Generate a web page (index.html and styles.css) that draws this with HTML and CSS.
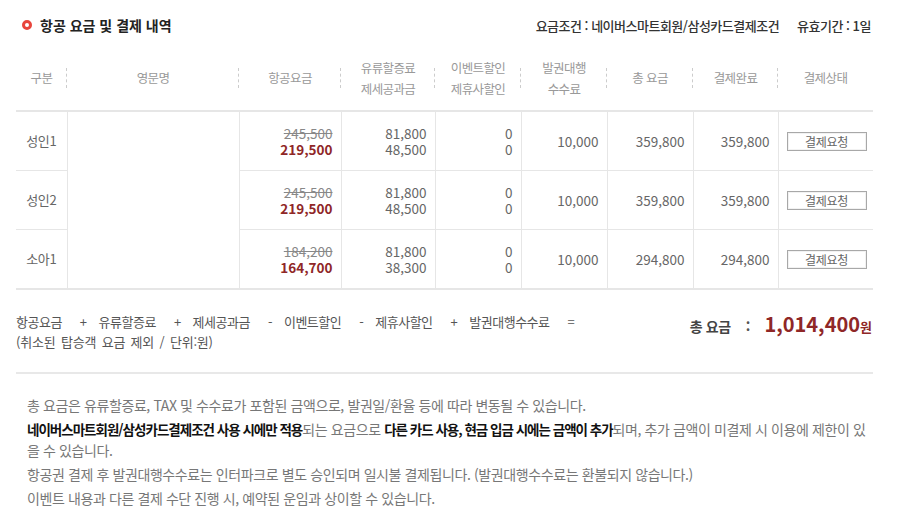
FILE: index.html
```html
<!DOCTYPE html>
<html lang="ko">
<head>
    <meta charset="UTF-8">
    <meta name="viewport" content="width=device-width, initial-scale=1.0">
    <title>항공 요금 및 결제 내역</title>
    <link rel="stylesheet" href="styles.css">
</head>
<body>
    <div class="wrap">
        <div class="head">
            <h2 class="title"><span class="dot"></span>항공 요금 및 결제 내역</h2>
            <div class="cond">
                <span>요금조건 : 네이버스마트회원/삼성카드결제조건</span>
                <span>유효기간 : 1일</span>
            </div>
        </div>

        <table class="fare">
            <colgroup>
                <col style="width:51px">
                <col style="width:172px">
                <col style="width:102px">
                <col style="width:94px">
                <col style="width:86px">
                <col style="width:86px">
                <col style="width:86px">
                <col style="width:85px">
                <col style="width:95px">
            </colgroup>
            <thead>
                <tr>
                    <th>구분</th>
                    <th>영문명</th>
                    <th>항공요금</th>
                    <th>유류할증료<br>제세공과금</th>
                    <th>이벤트할인<br>제휴사할인</th>
                    <th>발권대행<br>수수료</th>
                    <th>총 요금</th>
                    <th>결제완료</th>
                    <th>결제상태</th>
                </tr>
            </thead>
            <tbody>
                <tr>
                    <td class="c">성인1</td>
                    <td rowspan="3"></td>
                    <td class="num"><span class="old">245,500</span><br><span class="new">219,500</span></td>
                    <td class="num">81,800<br>48,500</td>
                    <td class="num">0<br>0</td>
                    <td class="num">10,000</td>
                    <td class="num">359,800</td>
                    <td class="num">359,800</td>
                    <td class="c"><button class="pay-btn">결제요청</button></td>
                </tr>
                <tr>
                    <td class="c">성인2</td>
                    <td class="num"><span class="old">245,500</span><br><span class="new">219,500</span></td>
                    <td class="num">81,800<br>48,500</td>
                    <td class="num">0<br>0</td>
                    <td class="num">10,000</td>
                    <td class="num">359,800</td>
                    <td class="num">359,800</td>
                    <td class="c"><button class="pay-btn">결제요청</button></td>
                </tr>
                <tr>
                    <td class="c">소아1</td>
                    <td class="num"><span class="old">184,200</span><br><span class="new">164,700</span></td>
                    <td class="num">81,800<br>38,300</td>
                    <td class="num">0<br>0</td>
                    <td class="num">10,000</td>
                    <td class="num">294,800</td>
                    <td class="num">294,800</td>
                    <td class="c"><button class="pay-btn">결제요청</button></td>
                </tr>
            </tbody>
        </table>

        <div class="sum">
            <div class="formula">
                <p>항공요금<span class="op">+</span>유류할증료<span class="op">+</span>제세공과금<span class="op">-</span>이벤트할인<span class="op">-</span>제휴사할인<span class="op">+</span>발권대행수수료<span class="op">=</span></p>
                <p class="unit">(취소된 탑승객 요금 제외 / 단위:원)</p>
            </div>
            <div class="total">
                <span class="total-label">총 요금</span>
                <span class="colon">:</span>
                <span class="total-price">1,014,400</span><span class="won">원</span>
            </div>
        </div>

        <ul class="notes">
            <li>총 요금은 유류할증료, TAX 및 수수료가 포함된 금액으로, 발권일/환율 등에 따라 변동될 수 있습니다.</li>
            <li><strong>네이버스마트회원/삼성카드결제조건 사용 시에만 적용</strong>되는 요금으로 <strong>다른 카드 사용, 현금 입금 시에는 금액이 추가</strong>되며, 추가 금액이 미결제 시 이용에 제한이 있을 수 있습니다.</li>
            <li>항공권 결제 후 발권대행수수료는 인터파크로 별도 승인되며 일시불 결제됩니다. (발권대행수수료는 환불되지 않습니다.)</li>
            <li>이벤트 내용과 다른 결제 수단 진행 시, 예약된 운임과 상이할 수 있습니다.</li>
        </ul>
    </div>
</body>
</html>
```

FILE: styles.css
```css
body {
    margin: 0;
    font-family: "Noto Sans CJK KR", "Noto Sans", sans-serif;
    color: #666;
    background-color: #fff;
}

.wrap {
    width: 857px;
    margin-left: 16px;
}

.head {
    display: flex;
    justify-content: space-between;
    align-items: center;
    height: 40px;
    padding-top: 5px;
}

.title {
    display: flex;
    align-items: center;
    margin: 0 0 0 6px;
    font-size: 14px;
    font-weight: 700;
    color: #222;
}

.dot {
    width: 10px;
    height: 10px;
    box-sizing: border-box;
    border: 3px solid #e8453c;
    border-radius: 50%;
    margin-right: 8px;
}

.cond {
    display: flex;
    gap: 18px;
    margin-right: 2px;
    font-size: 13px;
    font-weight: 500;
    color: #333;
    letter-spacing: -0.5px;
}

.fare {
    width: 100%;
    border-collapse: collapse;
    table-layout: fixed;
}

.fare th {
    position: relative;
    height: 65px;
    padding: 0;
    font-size: 12.5px;
    font-weight: 400;
    line-height: 21px;
    color: #999;
    letter-spacing: -0.6px;
    border-bottom: 2px solid #e6e6e6;
}

.fare th:not(:last-child)::after {
    content: "";
    position: absolute;
    right: 0;
    top: 23px;
    height: 20px;
    border-right: 1px dashed #ccc;
}

.fare td {
    height: 58px;
    padding: 0 8px;
    font-size: 13px;
    line-height: 16.5px;
    color: #666;
    border: 1px solid #e6e6e6;
}

.fare td:first-child {
    border-left: none;
}

.fare td:last-child {
    border-right: none;
}

.fare tbody tr:last-child td,
.fare td[rowspan] {
    border-bottom: 2px solid #e6e6e6;
}

.fare td.c {
    text-align: center;
    letter-spacing: -0.4px;
}

.fare td.num {
    text-align: right;
    font-size: 13.5px;
}

.old {
    color: #888;
    text-decoration: line-through;
}

.new {
    color: #8f2727;
    font-weight: 700;
}

.pay-btn {
    width: 80px;
    height: 19px;
    padding: 0;
    font-family: inherit;
    font-size: 12px;
    color: #666;
    background: #fff;
    border: 1px solid #a8a8a8;
    box-shadow: inset 0 0 0 1px #f2f2f2;
    letter-spacing: -0.3px;
}

.sum {
    display: flex;
    justify-content: space-between;
    align-items: flex-start;
    padding: 22px 0 20px;
    border-bottom: 2px solid #e8e8e8;
}

.formula p {
    margin: 0;
    font-size: 13px;
    line-height: 20px;
    color: #555;
    letter-spacing: -0.5px;
}

.formula .unit {
    letter-spacing: -0.2px;
    word-spacing: 2px;
}

.op {
    margin: 0 12px 0 18px;
}

.total {
    display: flex;
    align-items: baseline;
    margin-top: -3px;
    margin-right: 1px;
}

.total-label {
    font-size: 14px;
    font-weight: 700;
    color: #444;
    letter-spacing: -0.4px;
}

.colon {
    margin: 0 14px 0 15px;
    font-size: 14px;
    font-weight: 700;
    color: #555;
}

.total-price {
    font-size: 20px;
    font-weight: 700;
    color: #8f2727;
}

.won {
    font-size: 13px;
    font-weight: 700;
    color: #8f2727;
}

.notes {
    list-style: none;
    margin: 21px 0 0;
    padding: 0 0 0 11px;
    font-size: 14px;
    line-height: 21px;
    color: #777;
    letter-spacing: -0.4px;
}

.notes li {
    margin-bottom: 3px;
}

.notes strong {
    font-size: 13.5px;
    color: #111;
    letter-spacing: -1px;
}
```
